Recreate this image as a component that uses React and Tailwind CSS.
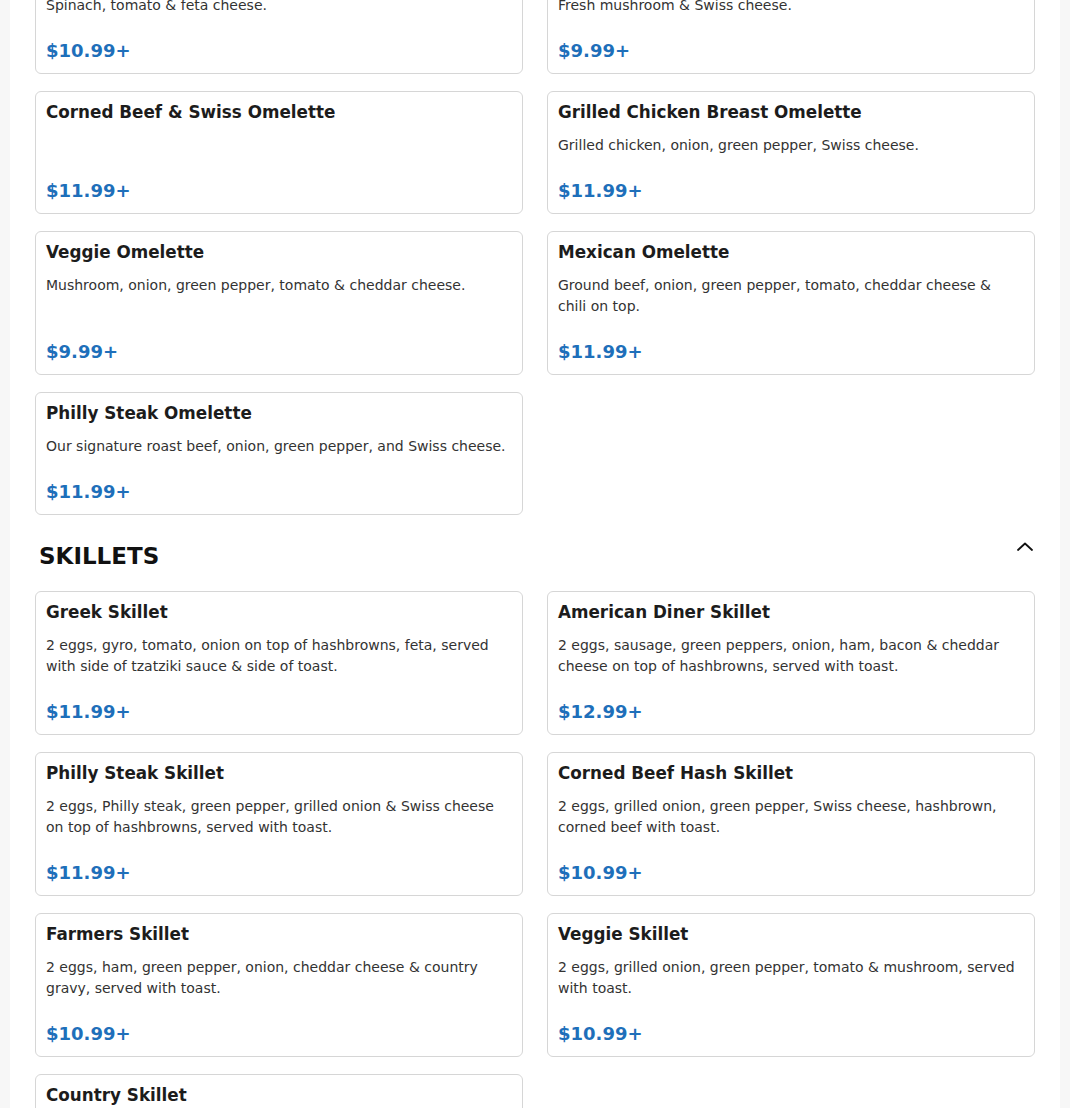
const omelettes = [
  { name: "Greek Omelette", desc: "Spinach, tomato & feta cheese.", price: "$10.99+" },
  { name: "Mushroom & Swiss Omelette", desc: "Fresh mushroom & Swiss cheese.", price: "$9.99+" },
  { name: "Corned Beef & Swiss Omelette", desc: "", price: "$11.99+" },
  { name: "Grilled Chicken Breast Omelette", desc: "Grilled chicken, onion, green pepper, Swiss cheese.", price: "$11.99+" },
  { name: "Veggie Omelette", desc: "Mushroom, onion, green pepper, tomato & cheddar cheese.", price: "$9.99+" },
  { name: "Mexican Omelette", desc: "Ground beef, onion, green pepper, tomato, cheddar cheese & chili on top.", price: "$11.99+" },
  { name: "Philly Steak Omelette", desc: "Our signature roast beef, onion, green pepper, and Swiss cheese.", price: "$11.99+" },
];

const skillets = [
  { name: "Greek Skillet", desc: "2 eggs, gyro, tomato, onion on top of hashbrowns, feta, served with side of tzatziki sauce & side of toast.", price: "$11.99+" },
  { name: "American Diner Skillet", desc: "2 eggs, sausage, green peppers, onion, ham, bacon & cheddar cheese on top of hashbrowns, served with toast.", price: "$12.99+" },
  { name: "Philly Steak Skillet", desc: "2 eggs, Philly steak, green pepper, grilled onion & Swiss cheese on top of hashbrowns, served with toast.", price: "$11.99+" },
  { name: "Corned Beef Hash Skillet", desc: "2 eggs, grilled onion, green pepper, Swiss cheese, hashbrown, corned beef with toast.", price: "$10.99+" },
  { name: "Farmers Skillet", desc: "2 eggs, ham, green pepper, onion, cheddar cheese & country gravy, served with toast.", price: "$10.99+" },
  { name: "Veggie Skillet", desc: "2 eggs, grilled onion, green pepper, tomato & mushroom, served with toast.", price: "$10.99+" },
  { name: "Country Skillet", desc: "2 eggs, sausage, onion, green pepper, country gravy on top of hashbrowns, served with toast.", price: "$10.99+" },
];

function ItemCard({ item }) {
  return (
    <div className="flex flex-col rounded-md border border-[#d6d6d6] bg-white pl-[10px] pr-[16px] pt-[11px] pb-[9px]">
      <div className="text-[16.8px] font-bold leading-[18px] text-[#1c1c1c]">{item.name}</div>
      <p className="mt-[14px] min-h-[21px] text-[14px] leading-[21px] text-[#333]">{item.desc}</p>
      <div className="mt-auto pt-[21px] text-[18px] font-bold leading-[27px] text-[#1e6fba]">{item.price}</div>
    </div>
  );
}

function Grid({ items }) {
  return (
    <div className="grid grid-cols-2 gap-x-6 gap-y-[17px]">
      {items.map((it) => (
        <ItemCard key={it.name} item={it} />
      ))}
    </div>
  );
}

export default function App() {
  return (
    <div
      className="min-h-screen overflow-hidden bg-[#f7f7f7] px-[10px]"
      style={{ fontFamily: '"DejaVu Sans", Verdana, sans-serif' }}
    >
      <div className="bg-white px-[25px] pb-10">
        <div className="mt-[-49px]">
          <Grid items={omelettes} />
        </div>
        <div className="flex items-center justify-between pl-[4px] pr-[2px] pt-[27px] pb-[21px]">
          <h2 className="text-[23px] font-bold leading-[28px] text-[#111]">SKILLETS</h2>
          <svg width="16" height="10" viewBox="0 0 16 10" className="mb-[18px]" fill="none">
            <polyline points="1,8 8,1.5 15,8" stroke="#111" strokeWidth="1.8" strokeLinecap="round" strokeLinejoin="round" />
          </svg>
        </div>
        <Grid items={skillets} />
      </div>
    </div>
  );
}
